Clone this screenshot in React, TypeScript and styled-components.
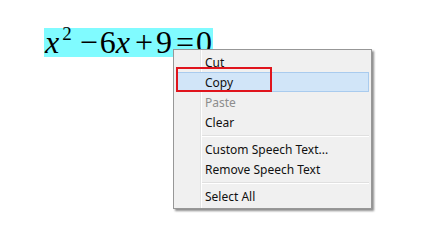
import styled, { createGlobalStyle } from "styled-components";

const Global = createGlobalStyle`
html, body {
  margin: 0;
  padding: 0;
  background: #ffffff;
}
`;

const Stage = styled.div`
position: relative;
width: 432px;
height: 246px;
padding: 28px 0 0 44px;
box-sizing: border-box;
`;

const Equation = styled.div`
display: inline-flex;
align-items: baseline;
height: 29px;
padding: 0 1px 0 1px;
box-sizing: border-box;
background: #80fbff;
font-family: "Liberation Serif", "Times New Roman", serif;
font-size: 32px;
line-height: 29px;
color: #000;
white-space: pre;
`;

const Var = styled.span`
font-style: italic;
`;

const Sup = styled.span`
font-size: 19px;
position: relative;
top: -13px;
margin-left: 3px;
`;

const Op = styled.span<{ $l: number; $r: number }>`
margin-left: ${p => p.$l}px;
margin-right: ${p => p.$r}px;
`;

const Menu = styled.ul`
position: absolute;
left: 173px;
top: 49px;
width: 199px;
margin: 0;
padding: 2px 0;
list-style: none;
box-sizing: border-box;
background: #f0f0f0;
border: 1px solid #979797;
box-shadow: 2px 2px 2px rgba(0, 0, 0, 0.45);
font-family: "Noto Sans", "Open Sans", sans-serif;
font-size: 12px;
&::before {
  content: "";
  position: absolute;
  left: 26px;
  top: 0;
  bottom: 0;
  width: 1px;
  background: #e2e3e3;
  box-shadow: 1px 0 0 #ffffff;
}
`;

const Item = styled.li<{ $active?: boolean; $disabled?: boolean }>`
position: relative;
height: 20px;
margin: 0 2px;
padding-left: 28px;
display: flex;
align-items: center;
box-sizing: border-box;
color: ${p => (p.$disabled ? "#8d8d8d" : "#111111")};
background: ${p => (p.$active ? "#d1e5f8" : "transparent")};
border: 1px solid ${p => (p.$active ? "#a9cbee" : "transparent")};
`;

const Separator = styled.li`
height: 7px;
margin-left: 27px;
margin-right: 2px;
display: flex;
align-items: center;
&::after {
  content: "";
  flex: 1;
  height: 1px;
  background: #e0e0e0;
  box-shadow: 0 1px 0 #ffffff;
}
`;

const Annotation = styled.div`
position: absolute;
left: 2px;
top: 17px;
width: 96px;
height: 25px;
box-sizing: border-box;
border: 2px solid #e0141c;
pointer-events: none;
`;

export default function App() {
  return (
    <>
      <Global />
      <Stage>
        <Equation>
          <Var>x</Var>
          <Sup>2</Sup>
          <Op $l={8} $r={2}>−</Op>6<Var>x</Var>
          <Op $l={5} $r={3}>+</Op>9
          <Op $l={4} $r={2}>=</Op>0
        </Equation>
        <Menu>
          <Item>Cut</Item>
          <Item $active>Copy</Item>
          <Item $disabled>Paste</Item>
          <Item>Clear</Item>
          <Separator />
          <Item>Custom Speech Text...</Item>
          <Item>Remove Speech Text</Item>
          <Separator />
          <Item>Select All</Item>
          <Annotation />
        </Menu>
      </Stage>
    </>
  );
}
